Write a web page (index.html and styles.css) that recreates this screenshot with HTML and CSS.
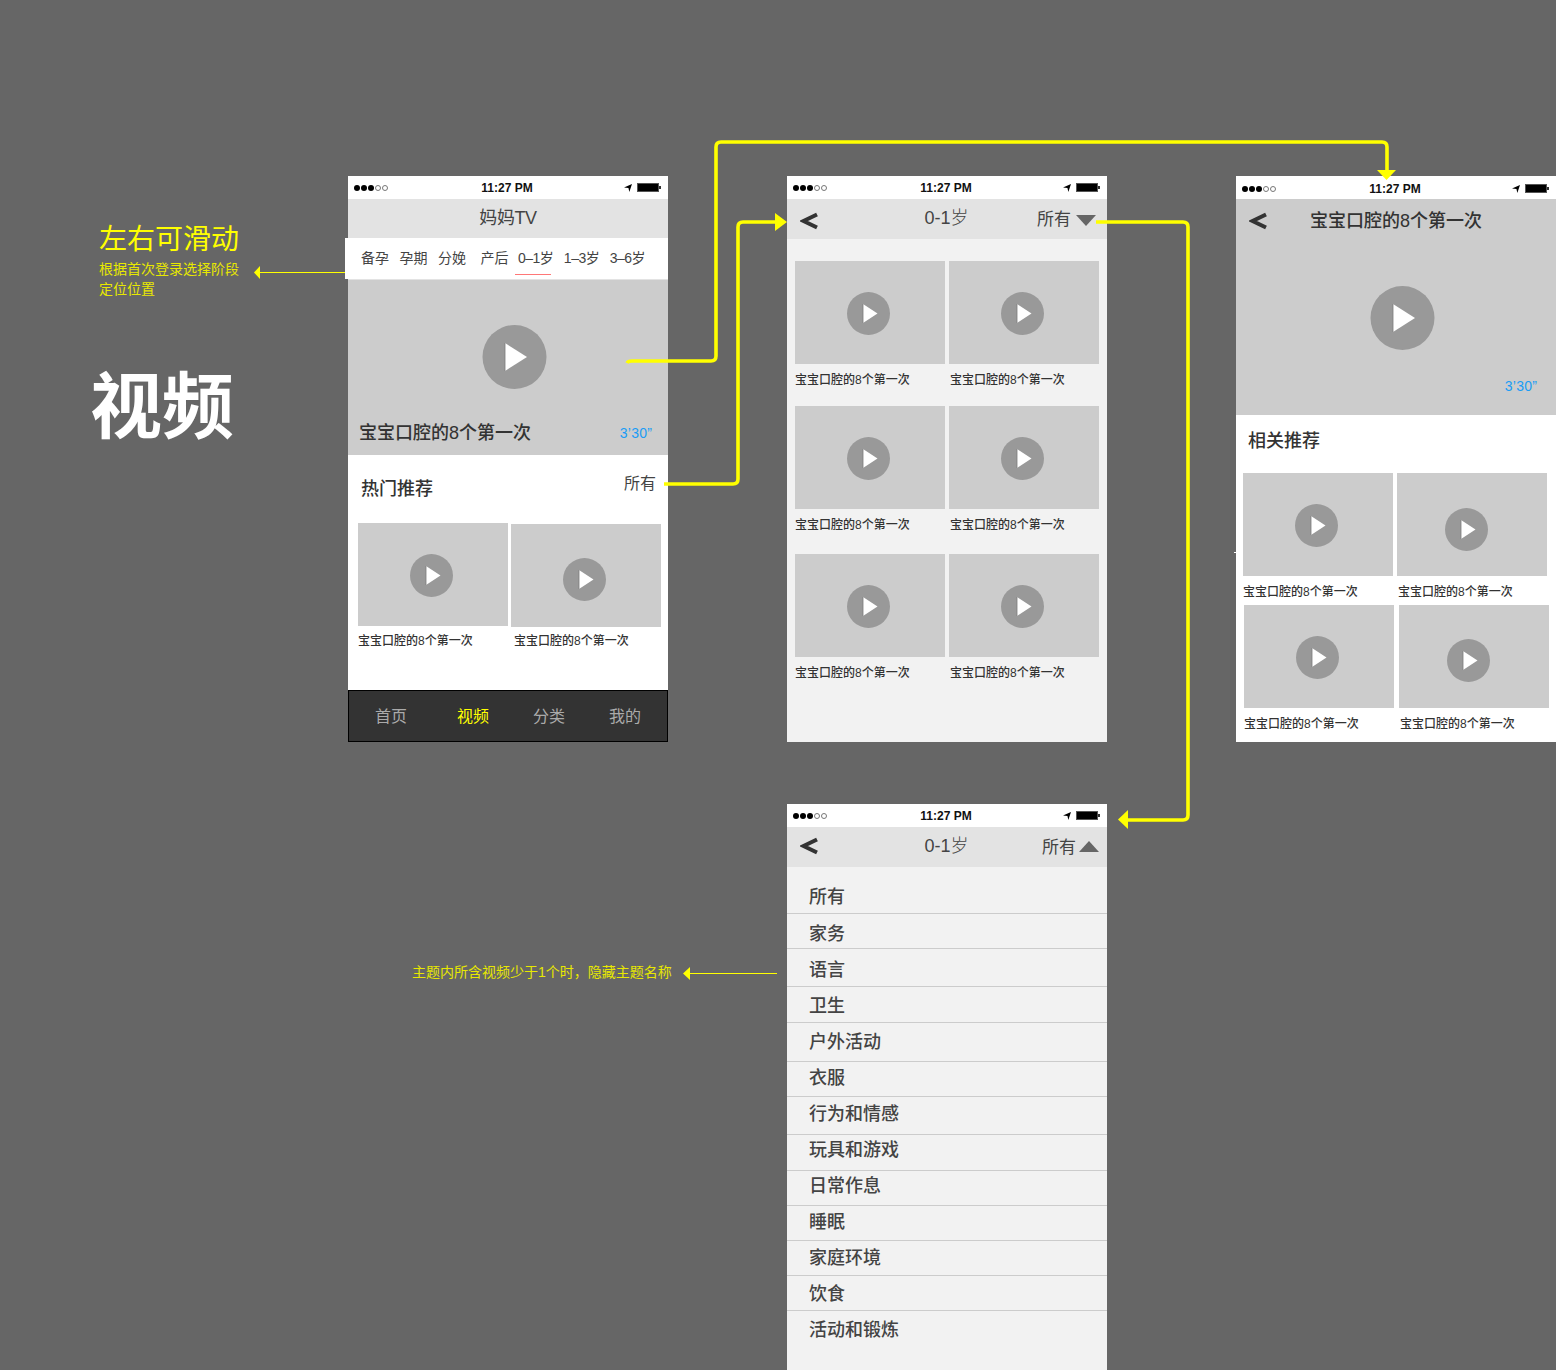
FILE: index.html
```html
<!DOCTYPE html>
<html lang="zh-CN">
    <head>
        <meta charset="UTF-8" />
        <meta name="viewport" content="width=device-width, initial-scale=1.0" />
        <title>视频</title>
        <link rel="stylesheet" href="styles.css">
    </head>
    <body>
        <svg class="defs" width="0" height="0">
            <symbol id="play" viewBox="0 0 65 65">
                <circle cx="32.5" cy="32" r="32" fill="#999" />
                <polygon points="23,18 45,32 23,46" fill="#fff" />
                <path d="M23 18V46" stroke="#7c7c7c" stroke-width="0.8" />
            </symbol>
            <symbol id="play-small" viewBox="0 0 43 43">
                <circle cx="21.5" cy="21.5" r="21.5" fill="#999" />
                <polygon points="16,12 30.500,21.5 16,31" fill="#fff" />
                <path d="M16 12V31" stroke="#7c7c7c" stroke-width="0.8" />
            </symbol>
            <symbol id="back" viewBox="0 0 18 18">
                <polyline points="17,2.500 3.500,9 17,15.500" fill="none" stroke="#333" stroke-width="4" />
            </symbol>
            <symbol id="status-arrow" viewBox="0 0 9 9">
                <polygon points="0,4 9,0 6,9 5,4.5" fill="#000" />
            </symbol>
        </svg>

        <div class="notes">
            <div class="note note-swipe">
                <h2>左右可滑动</h2>
                <p>根据首次登录选择阶段<br />定位位置</p>
            </div>
            <h1 class="page-title">视频</h1>
            <p class="note note-topic">主题内所含视频少于1个时，隐藏主题名称</p>
        </div>

        <!-- 首页 -->
        <section class="screen screen-home">
            <div class="status">
                <span class="dots"><i></i><i></i><i></i><i class="off"></i><i class="off"></i></span>
                <span class="clock">11:27 PM</span>
                <span class="status-right"><svg class="loc"><use href="#status-arrow" /></svg><span class="battery"></span></span>
            </div>
            <header class="nav nav-home">妈妈TV</header>
            <nav class="tabs">
                <span>备孕</span>
                <span>孕期</span>
                <span>分娩</span>
                <span class="tab-gap">产后</span>
                <span class="tab-age tab-on">0–1岁</span>
                <span class="tab-age">1–3岁</span>
                <span class="tab-age">3–6岁</span>
            </nav>
            <div class="hero hero-home">
                <svg class="play-big"><use href="#play" /></svg>
                <div class="hero-foot">
                    <span class="hero-title">宝宝口腔的8个第一次</span>
                    <span class="time">3’30”</span>
                </div>
            </div>
            <div class="home-body">
                <div class="section-head">
                    <h3>热门推荐</h3>
                    <span class="more">所有</span>
                </div>
                <div class="home-cards">
                    <div class="card">
                        <div class="thumb"><svg class="play"><use href="#play-small" /></svg></div>
                        <p>宝宝口腔的8个第一次</p>
                    </div>
                    <div class="card card-second">
                        <div class="thumb thumb-low"><svg class="play"><use href="#play-small" /></svg></div>
                        <p>宝宝口腔的8个第一次</p>
                    </div>
                </div>
            </div>
            <footer class="tabbar">
                <span class="tabbar-first">首页</span>
                <span class="tabbar-on">视频</span>
                <span>分类</span>
                <span>我的</span>
            </footer>
        </section>

        <!-- 列表 -->
        <section class="screen screen-list">
            <div class="status">
                <span class="dots"><i></i><i></i><i></i><i class="off"></i><i class="off"></i></span>
                <span class="clock">11:27 PM</span>
                <span class="status-right"><svg class="loc"><use href="#status-arrow" /></svg><span class="battery"></span></span>
            </div>
            <header class="nav nav-sub">
                <svg class="back"><use href="#back" /></svg>
                <span class="nav-title">0-1岁</span>
                <span class="nav-filter">所有<i class="caret-down"></i></span>
            </header>
            <div class="grid">
                <div class="row">
                    <div class="card">
                        <div class="thumb"><svg class="play"><use href="#play-small" /></svg></div>
                        <p>宝宝口腔的8个第一次</p>
                    </div>
                    <div class="card">
                        <div class="thumb"><svg class="play"><use href="#play-small" /></svg></div>
                        <p>宝宝口腔的8个第一次</p>
                    </div>
                </div>
                <div class="row row-tall">
                    <div class="card">
                        <div class="thumb"><svg class="play"><use href="#play-small" /></svg></div>
                        <p>宝宝口腔的8个第一次</p>
                    </div>
                    <div class="card">
                        <div class="thumb"><svg class="play"><use href="#play-small" /></svg></div>
                        <p>宝宝口腔的8个第一次</p>
                    </div>
                </div>
                <div class="row">
                    <div class="card">
                        <div class="thumb"><svg class="play"><use href="#play-small" /></svg></div>
                        <p>宝宝口腔的8个第一次</p>
                    </div>
                    <div class="card">
                        <div class="thumb"><svg class="play"><use href="#play-small" /></svg></div>
                        <p>宝宝口腔的8个第一次</p>
                    </div>
                </div>
            </div>
        </section>

        <!-- 详情 -->
        <section class="screen screen-detail">
            <div class="status status-low">
                <span class="dots"><i></i><i></i><i></i><i class="off"></i><i class="off"></i></span>
                <span class="clock">11:27 PM</span>
                <span class="status-right"><svg class="loc"><use href="#status-arrow" /></svg><span class="battery"></span></span>
            </div>
            <div class="hero hero-detail">
                <div class="detail-head">
                    <svg class="back"><use href="#back" /></svg>
                    <span class="hero-title">宝宝口腔的8个第一次</span>
                </div>
                <svg class="play-big"><use href="#play" /></svg>
                <span class="time">3’30”</span>
            </div>
            <h3 class="detail-sub">相关推荐</h3>
            <div class="detail-rows">
                <div class="detail-row">
                    <div class="card">
                        <div class="thumb"><svg class="play"><use href="#play-small" /></svg></div>
                        <p>宝宝口腔的8个第一次</p>
                    </div>
                    <div class="card">
                        <div class="thumb thumb-lower thumb-left"><svg class="play"><use href="#play-small" /></svg></div>
                        <p>宝宝口腔的8个第一次</p>
                    </div>
                </div>
                <div class="detail-row detail-row-shift">
                    <div class="card">
                        <div class="thumb"><svg class="play"><use href="#play-small" /></svg></div>
                        <p>宝宝口腔的8个第一次</p>
                    </div>
                    <div class="card card-wide">
                        <div class="thumb thumb-low thumb-left"><svg class="play"><use href="#play-small" /></svg></div>
                        <p>宝宝口腔的8个第一次</p>
                    </div>
                </div>
            </div>
        </section>

        <!-- 筛选 -->
        <section class="screen screen-filter">
            <div class="status">
                <span class="dots"><i></i><i></i><i></i><i class="off"></i><i class="off"></i></span>
                <span class="clock">11:27 PM</span>
                <span class="status-right"><svg class="loc"><use href="#status-arrow" /></svg><span class="battery"></span></span>
            </div>
            <header class="nav nav-sub">
                <svg class="back"><use href="#back" /></svg>
                <span class="nav-title">0-1岁</span>
                <span class="nav-filter nav-filter-open">所有<i class="caret-up"></i></span>
            </header>
            <ul class="topics">
                <li>所有</li>
                <li>家务</li>
                <li>语言</li>
                <li>卫生</li>
                <li>户外活动</li>
                <li>衣服</li>
                <li>行为和情感</li>
                <li>玩具和游戏</li>
                <li>日常作息</li>
                <li>睡眠</li>
                <li>家庭环境</li>
                <li>饮食</li>
                <li>活动和锻炼</li>
            </ul>
        </section>

        <!-- 连接线 -->
        <svg class="links" width="1556" height="1370" viewBox="0 0 1556 1370">
            <g fill="none" stroke="#ff0" stroke-width="3.6">
                <path d="M627 363Q628 361 632 361H711Q716 361 716 356V147Q716 142 721 142H1382Q1387 142 1387 147V171" />
                <path d="M664 484H733Q738 484 738 479V227Q738 222 743 222H776" />
                <path d="M1096 222H1183Q1188 222 1188 227V815Q1188 820 1183 820H1127" />
            </g>
            <g fill="none" stroke="#ff0" stroke-width="1">
                <path d="M345 272.5H260" />
                <path d="M777 973.5H689" />
            </g>
            <path d="M1234 552.5H1236" fill="none" stroke="#fff" stroke-width="1" />
            <g fill="#ff0">
                <polygon points="1377,170 1396,170 1386.500,180" />
                <polygon points="775,213 787,222 775,231" />
                <polygon points="1128,810 1128,829 1118,819.500" />
                <polygon points="260,266 260,279 254,272.500" />
                <polygon points="690,967 690,980 683,973.500" />
            </g>
        </svg>
    </body>
</html>
```

FILE: styles.css
```css
* {
    box-sizing: border-box;
}

html,
body {
    margin: 0;
    padding: 0;
    height: 1370px;
    overflow: hidden;
}

body {
    position: relative;
    background-color: #666;
    color: #333;
    font-family: "Liberation Sans", "Noto Sans CJK SC", sans-serif;
}

h1,
h2,
h3,
p,
ul {
    margin: 0;
    padding: 0;
    font-weight: normal;
}

.defs {
    position: absolute;
}

/* notes on the canvas */
.note-swipe {
    position: absolute;
    left: 99px;
    top: 221px;
    color: #ff0;
}

.note-swipe h2 {
    font-size: 28px;
    line-height: 38px;
}

.note-swipe p {
    font-size: 14px;
    line-height: 20px;
    color: #e8e800;
}

.page-title {
    position: absolute;
    left: 90px;
    top: 357px;
    font-size: 72px;
    line-height: 100px;
    font-weight: bold;
    color: #fff;
}

.note-topic {
    position: absolute;
    left: 412px;
    top: 962px;
    font-size: 14px;
    line-height: 20px;
    color: #e8e800;
}

/* screens */
.screen {
    position: absolute;
    width: 320px;
    height: 566px;
    display: flex;
    flex-direction: column;
    background-color: #f2f2f2;
}

.screen-home {
    left: 348px;
    top: 176px;
    background-color: #fff;
}

.screen-list {
    left: 787px;
    top: 176px;
}

.screen-detail {
    left: 1236px;
    top: 176px;
    background-color: #fff;
}

.screen-filter {
    left: 787px;
    top: 804px;
}

.status {
    height: 23px;
    flex-shrink: 0;
    padding: 0 7px 0 6px;
    display: grid;
    grid-template-columns: 1fr auto 1fr;
    align-items: center;
    background-color: #fff;
}

.status-low {
    padding-top: 2px;
}

.dots {
    display: flex;
    gap: 1px;
}

.dots i {
    width: 6px;
    height: 6px;
    border-radius: 50%;
    background-color: #000;
}

.dots i.off {
    background-color: transparent;
    border: 1px solid #777;
}

.clock {
    font-size: 12px;
    font-weight: bold;
    color: #111;
    margin-left: -1px;
}

.status-right {
    display: flex;
    justify-content: flex-end;
    align-items: center;
    gap: 5px;
}

.loc {
    width: 8px;
    height: 8px;
}

.battery {
    position: relative;
    width: 22px;
    height: 9px;
    margin-right: 2px;
    background-color: #000;
    border: 1px solid #555;
}

.battery::after {
    content: "";
    position: absolute;
    right: -3px;
    top: 2px;
    width: 2px;
    height: 3px;
    background-color: #333;
}

.nav {
    flex-shrink: 0;
    background-color: #e3e3e3;
}

.nav-home {
    height: 39px;
    text-align: center;
    font-size: 18px;
    line-height: 38px;
    letter-spacing: -0.4px;
    color: #444;
}

.nav-sub {
    height: 40px;
    padding: 0 8px 0 13px;
    display: grid;
    grid-template-columns: 1fr auto 1fr;
    align-items: center;
}

.back {
    width: 18px;
    height: 18px;
}

.screen-list .back {
    margin-top: 4px;
}

.screen-filter .back {
    margin-bottom: 2px;
}

.nav-title {
    font-size: 18px;
    line-height: 36px;
    font-weight: 300;
    color: #444;
    margin: 0 0 2px -6px;
}

.nav-filter {
    display: flex;
    align-items: center;
    justify-content: flex-end;
    gap: 5px;
    margin-bottom: 4px;
    padding-right: 3px;
    font-size: 17px;
    color: #444;
}

.nav-filter-open {
    padding-right: 0;
    gap: 3px;
}

.caret-down {
    width: 0;
    height: 0;
    border-left: 10px solid transparent;
    border-right: 10px solid transparent;
    border-top: 11px solid #666;
    margin-top: 7px;
}

.caret-up {
    width: 0;
    height: 0;
    border-left: 10px solid transparent;
    border-right: 10px solid transparent;
    border-bottom: 11px solid #666;
    margin-top: 2px;
}

/* home */
.tabs {
    height: 41px;
    margin-left: -3px;
    padding: 0 0 4px 16px;
    display: flex;
    align-items: center;
    gap: 10.500px;
    background-color: #fff;
    font-size: 14px;
    color: #444;
    flex-shrink: 0;
}

.tabs span {
    white-space: nowrap;
}

.tab-gap {
    margin-left: 4px;
}

.tab-age {
    letter-spacing: -0.5px;
}

.tab-on {
    position: relative;
    margin-left: -1px;
}

.tab-on::after {
    content: "";
    position: absolute;
    left: -3px;
    right: 2px;
    bottom: -8px;
    height: 1px;
    background-color: #f77;
}

.hero {
    background-color: #ccc;
    display: flex;
    flex-direction: column;
    flex-shrink: 0;
}

.hero-home {
    height: 176px;
    border-top: 1px solid #e3e3e3;
    padding: 45px 12px 0 11px;
}

.play-big {
    width: 65px;
    height: 65px;
    align-self: center;
    flex-shrink: 0;
}

.hero-home .play-big {
    margin-left: 13px;
}

.hero-foot {
    margin-top: 31px;
    display: flex;
    align-items: center;
    justify-content: space-between;
    padding-right: 4px;
}

.hero-title {
    font-size: 18px;
    line-height: 24px;
    font-weight: 500;
    color: #333;
}

.time {
    font-size: 14px;
    line-height: 20px;
    letter-spacing: 0.2px;
    color: #1a9cf5;
}

.home-body {
    flex: 1;
    padding: 0 7px 0 10px;
}

.section-head {
    height: 68px;
    padding: 21px 5px 0 3px;
    display: flex;
    justify-content: space-between;
    align-items: flex-start;
}

.section-head h3 {
    font-size: 18px;
    line-height: 26px;
    font-weight: 500;
}

.more {
    font-size: 16px;
    line-height: 18px;
    color: #444;
    margin-top: -1px;
}

.home-cards {
    display: flex;
    gap: 3px;
}

.card {
    width: 150px;
    flex-shrink: 0;
}

.card p {
    font-size: 12px;
    line-height: 18px;
    font-weight: 500;
    margin-top: 7px;
    color: #333;
    white-space: nowrap;
}

.home-cards .card p {
    margin-top: 6px;
}

.home-cards .card-second {
    margin-top: 1px;
}

.home-cards .card-second p {
    margin-top: 5px;
    padding-left: 3px;
}

.thumb {
    width: 150px;
    height: 103px;
    padding: 31px 0 0 52px;
    background-color: #ccc;
}

.thumb-low {
    padding-top: 34px;
}

.thumb-lower {
    padding-top: 35px;
}

.thumb-left {
    padding-left: 48px;
}

.play {
    display: block;
    width: 43px;
    height: 43px;
}

.tabbar {
    height: 52px;
    flex-shrink: 0;
    padding: 0 0 2px 26px;
    display: flex;
    align-items: center;
    gap: 44px;
    background-color: #333;
    border: 1px solid #000;
    font-size: 16px;
    color: #aaa;
}

.tabbar-first {
    margin-right: 6px;
}

.tabbar-on {
    color: #ff0;
}

/* list */
.grid {
    padding: 22px 8px 0;
}

.row {
    height: 145px;
    display: flex;
    gap: 4px;
}

.row-tall {
    height: 148px;
}

.row .card + .card p {
    padding-left: 1px;
}

/* detail */
.hero-detail {
    height: 216px;
    align-items: stretch;
}

.detail-head {
    height: 44px;
    padding: 0 0 0 13px;
    display: flex;
    align-items: center;
}

.detail-head .hero-title {
    margin-left: 43px;
}

.hero-detail .play-big {
    margin-top: 43px;
    margin-left: 12px;
}

.hero-detail .time {
    margin-top: 25px;
    align-self: flex-end;
    margin-right: 19px;
}

.detail-sub {
    height: 58px;
    padding: 13px 0 0 12px;
    font-size: 18px;
    line-height: 26px;
    font-weight: 500;
}

.detail-row {
    height: 132px;
    padding-left: 7px;
    display: flex;
    gap: 4px;
}

.detail-row-shift {
    padding-left: 8px;
}

.detail-row .card + .card p {
    padding-left: 1px;
}

.card-wide {
    margin-left: 1px;
}

/* filter */
.topics {
    list-style: none;
    font-size: 18px;
    line-height: 20px;
    font-weight: 500;
    color: #444;
}

.topics li {
    padding-left: 22px;
    border-bottom: 1px solid #ccc;
}

.topics li:last-child {
    border-bottom: 0;
}

.topics li:nth-child(1) {
    height: 47px;
    padding-top: 20px;
}

.topics li:nth-child(2) {
    height: 35px;
    padding-top: 10px;
}

.topics li:nth-child(3) {
    height: 38px;
    padding-top: 11px;
}

.topics li:nth-child(4) {
    height: 36px;
    padding-top: 9px;
}

.topics li:nth-child(5) {
    height: 39px;
    padding-top: 9px;
}

.topics li:nth-child(6) {
    height: 35px;
    padding-top: 6px;
}

.topics li:nth-child(7) {
    height: 38px;
    padding-top: 7px;
}

.topics li:nth-child(8) {
    height: 36px;
    padding-top: 5px;
}

.topics li:nth-child(9) {
    height: 35px;
    padding-top: 5px;
}

.topics li:nth-child(10) {
    height: 35px;
    padding-top: 6px;
}

.topics li:nth-child(11) {
    height: 35px;
    padding-top: 7px;
}

.topics li:nth-child(12) {
    height: 35px;
    padding-top: 8px;
}

.topics li:nth-child(13) {
    padding-top: 9px;
}

/* connectors sit over everything */
.links {
    position: absolute;
    left: 0;
    top: 0;
    pointer-events: none;
}
```
